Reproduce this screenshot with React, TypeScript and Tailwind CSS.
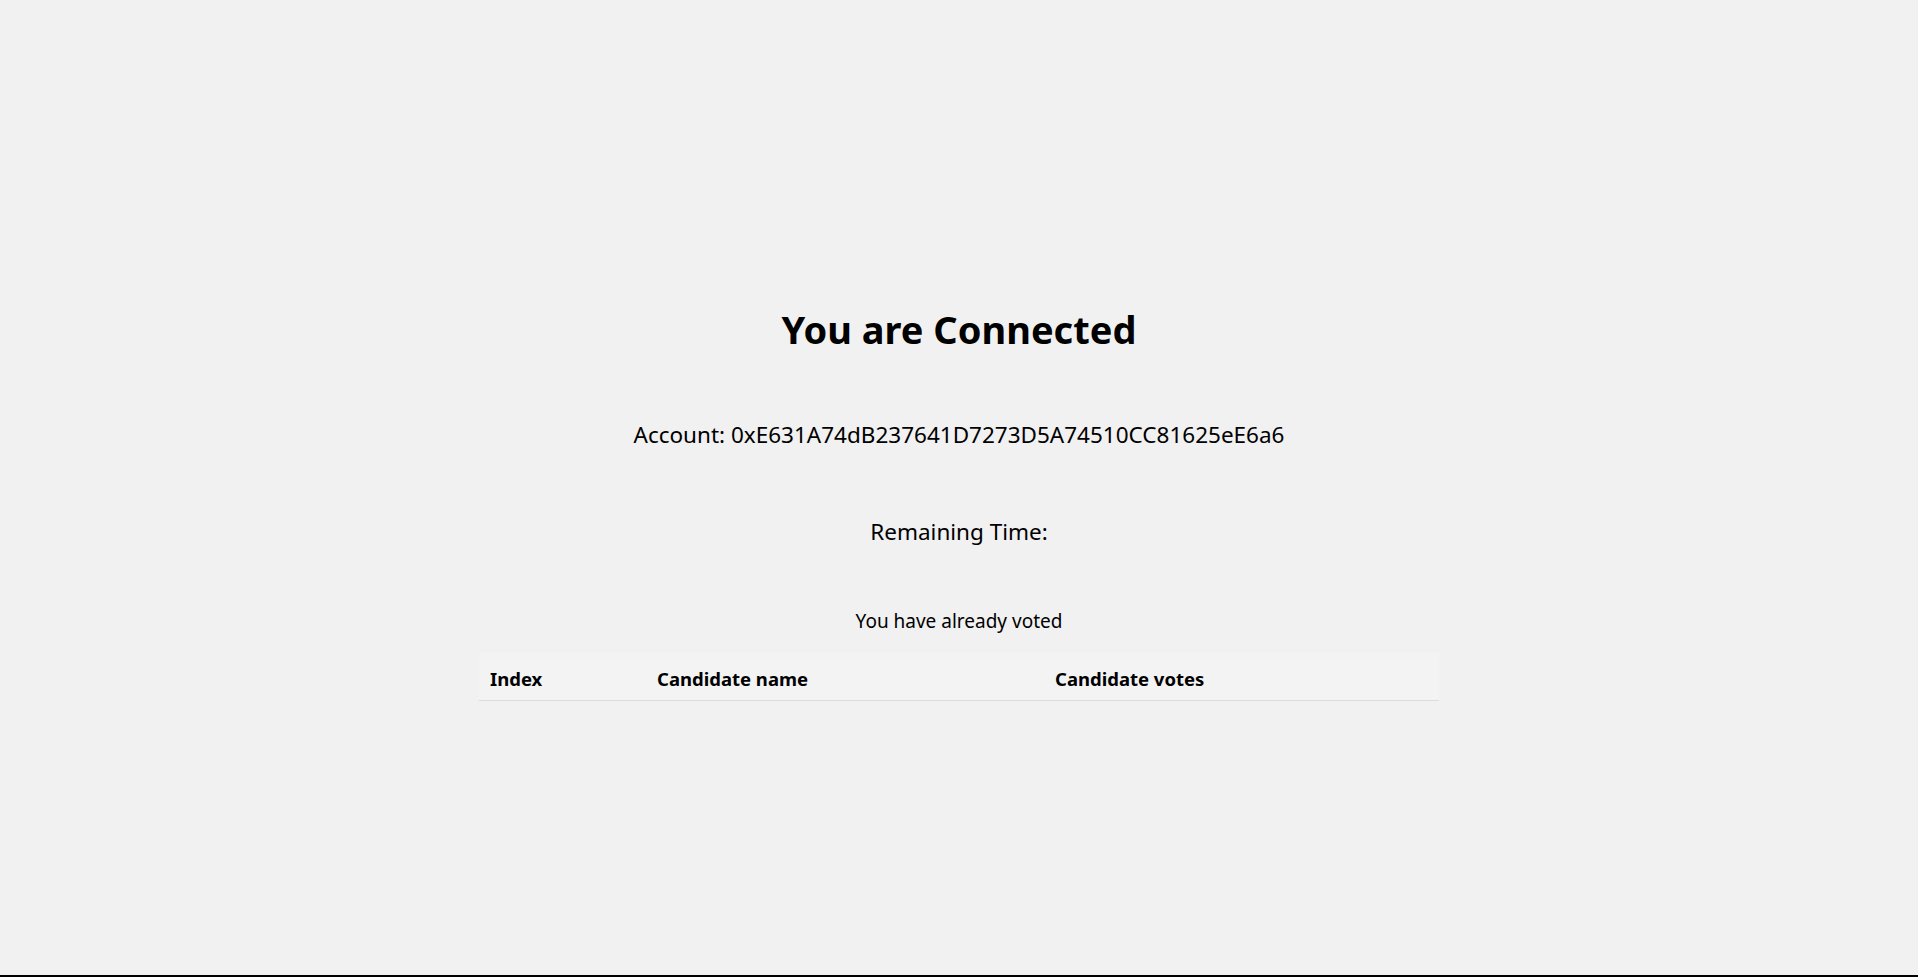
export default function App() {
  return (
    <div
      className="w-full h-[977px] bg-[#f1f1f1] text-black flex flex-col overflow-hidden"
      style={{ fontFamily: '"Segoe UI", "Noto Sans", sans-serif' }}
    >
      <div className="flex-1 flex flex-col items-center pt-[305px]">
        <h1 className="text-[38px] leading-[48px] font-bold">You are Connected</h1>
        <p className="mt-[67px] text-[22.5px] leading-[30px]">
          Account: 0xE631A74dB237641D7273D5A74510CC81625eE6a6
        </p>
        <p className="mt-[67px] text-[22.5px] leading-[30px]">Remaining Time:</p>
        <p className="mt-[62px] text-[19px] leading-[24px]">You have already voted</p>
        <table className="mt-[19px] w-[960px] border-collapse">
          <thead>
            <tr className="bg-[#f3f3f3] border-b border-[#dcdcdc] h-[48px]">
              <th className="w-[167px] text-left px-[11px] pt-[6px] text-[18.5px] font-bold">Index</th>
              <th className="w-[398px] text-left px-[11px] pt-[6px] text-[18.5px] font-bold">Candidate name</th>
              <th className="text-left px-[11px] pt-[6px] text-[18.5px] font-bold">Candidate votes</th>
            </tr>
          </thead>
          <tbody></tbody>
        </table>
      </div>
      <div className="h-[2px] bg-black w-full" />
    </div>
  );
}
